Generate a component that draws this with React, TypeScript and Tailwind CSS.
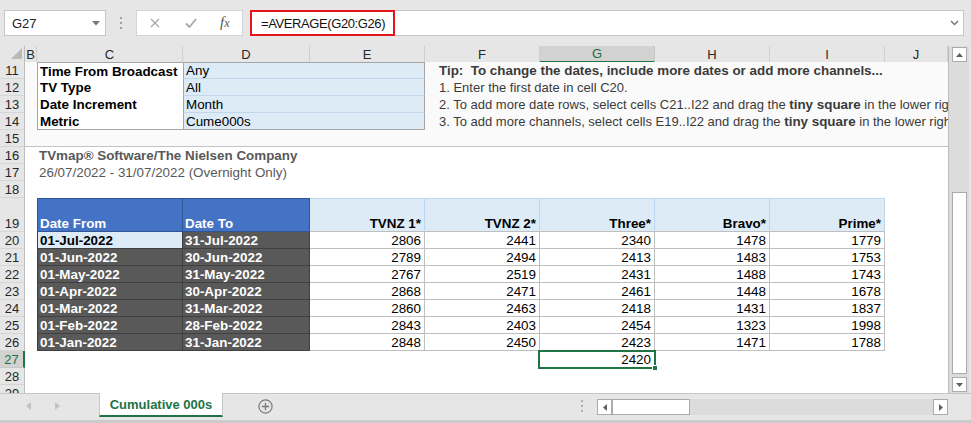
import React from "react";

const COLS = "grid grid-cols-[25px_12px_146px_127px_115px_115px_115px_115px_115px_63px] shrink-0";

const colLetters = ["B", "C", "D", "E", "F", "G", "H", "I", "J"];

const params: [string, string][] = [
  ["Time From Broadcast", "Any"],
  ["TV Type", "All"],
  ["Date Increment", "Month"],
  ["Metric", "Cume000s"],
];

const tips: React.ReactNode[] = [
  <b className="text-[13.4px]">Tip:  To change the dates, include more dates or add more channels...</b>,
  <>1. Enter the first date in cell C20.</>,
  <>
    2. To add more date rows, select cells C21..I22 and drag the <b className="text-[13.4px]">tiny square</b> in the lower right corner down.
  </>,
  <>
    3. To add more channels, select cells E19..I22 and drag the <b className="text-[13.4px]">tiny square</b> in the lower right corner across.
  </>,
];

const heads = ["TVNZ 1*", "TVNZ 2*", "Three*", "Bravo*", "Prime*"];

const rows: [string, string, number, number, number, number, number][] = [
  ["01-Jul-2022", "31-Jul-2022", 2806, 2441, 2340, 1478, 1779],
  ["01-Jun-2022", "30-Jun-2022", 2789, 2494, 2413, 1483, 1753],
  ["01-May-2022", "31-May-2022", 2767, 2519, 2431, 1488, 1743],
  ["01-Apr-2022", "30-Apr-2022", 2868, 2471, 2461, 1448, 1678],
  ["01-Mar-2022", "31-Mar-2022", 2860, 2463, 2418, 1431, 1837],
  ["01-Feb-2022", "28-Feb-2022", 2843, 2403, 2454, 1323, 1998],
  ["01-Jan-2022", "31-Jan-2022", 2848, 2450, 2423, 1471, 1788],
];

function RowHead({ n, selected = false }: { n: number; selected?: boolean }) {
  if (selected)
    return (
      <div className="flex items-end justify-center text-[13px] bg-[#d2d2d2] text-[#217346] border-r-2 border-r-[#217346] border-b border-b-[#c6c6c6]">
        {n}
      </div>
    );
  return (
    <div className="flex items-end justify-center text-[13px] bg-[#e6e6e6] text-[#262626] border-r border-r-[#bdbdbd] border-b border-b-[#d6d6d6]">
      {n}
    </div>
  );
}

function ParamRow({ i }: { i: number }) {
  const [k, v] = params[i];
  const cCls =
    i === 0
      ? "flex items-center pl-[2px] font-bold text-black bg-white border-l border-t border-[#a6a6a6] whitespace-nowrap"
      : i === 3
      ? "flex items-center pl-[2px] font-bold text-black bg-white border-l border-b border-[#a6a6a6] whitespace-nowrap"
      : "flex items-center pl-[2px] font-bold text-black bg-white border-l border-[#a6a6a6] whitespace-nowrap";
  const dCls =
    i === 0
      ? "col-span-2 flex items-center pl-[2px] text-black bg-[#ddebf7] border-l border-r border-t border-[#a6a6a6] border-b border-b-[#c2d7ec]"
      : i === 3
      ? "col-span-2 flex items-center pl-[2px] text-black bg-[#ddebf7] border-l border-r border-b border-[#a6a6a6]"
      : "col-span-2 flex items-center pl-[2px] text-black bg-[#ddebf7] border-l border-r border-[#a6a6a6] border-b border-b-[#c2d7ec]";
  return (
    <div className={`${COLS} h-[17px]`}>
      <RowHead n={11 + i} />
      <div className="bg-[#fafafa]" />
      <div className={cCls}>{k}</div>
      <div className={dCls}>{v}</div>
      <div className="col-span-5 bg-[#fafafa] pl-[14px] flex items-center overflow-hidden text-[#3b3b3b] text-[13px]">
        <span className="whitespace-pre">{tips[i]}</span>
      </div>
    </div>
  );
}

function DataRow({ n, r, first }: { n: number; r: (string | number)[]; first: boolean }) {
  return (
    <div className={`${COLS} h-[17px]`}>
      <RowHead n={n} />
      <div />
      <div
        className={
          first
            ? "flex items-center pl-[2px] font-bold bg-[#ddebf7] text-black border-l border-r border-b border-[#404040]"
            : "flex items-center pl-[2px] font-bold bg-[#595959] text-white border-l border-r border-b border-[#404040]"
        }
      >
        {r[0]}
      </div>
      <div className="flex items-center pl-[2px] font-bold bg-[#595959] text-white border-r border-b border-[#404040]">
        {r[1]}
      </div>
      {r.slice(2).map((v, i) => (
        <div
          key={i}
          className="flex items-center justify-end pr-[3px] bg-white text-black border-r border-b border-[#bfbfbf]"
        >
          {v}
        </div>
      ))}
      <div />
    </div>
  );
}

function EmptyRow({ n }: { n: number }) {
  return (
    <div className={`${COLS} h-[17px]`}>
      <RowHead n={n} />
    </div>
  );
}

export default function App() {
  return (
    <div className="w-[971px] h-[423px] flex flex-col overflow-hidden bg-[#e6e6e6] font-['Liberation_Sans',Arial,sans-serif] text-[13px] leading-[15px] text-black">
      {/* Formula bar */}
      <div className="h-[46px] shrink-0 flex items-start pl-[4px] pt-[10px] bg-[#e6e6e6]">
        <div className="w-[102px] h-[26px] bg-white border border-[#c6c6c6] flex items-center pl-[7px] pr-[5px] text-[#222]">
          <span className="flex-1">G27</span>
          <svg width="8" height="5" viewBox="0 0 8 5">
            <polygon points="0,0 8,0 4,4.5" fill="#7a7a7a" />
          </svg>
        </div>
        <div className="w-[30px] h-[26px] flex flex-col items-center justify-center gap-[3px]">
          <div className="w-[2px] h-[2px] bg-[#a0a0a0]" />
          <div className="w-[2px] h-[2px] bg-[#a0a0a0]" />
          <div className="w-[2px] h-[2px] bg-[#a0a0a0]" />
        </div>
        <div className="w-[107px] h-[26px] bg-white border border-[#d4d4d4] flex items-center pl-[13px]">
          <svg width="10" height="10" viewBox="0 0 10 10">
            <path d="M1 1 L9 9 M9 1 L1 9" stroke="#a8a8a8" strokeWidth="1.3" fill="none" />
          </svg>
          <svg className="ml-[25px]" width="12" height="10" viewBox="0 0 12 10">
            <path d="M1 5.5 L4.5 9 L11 1" stroke="#a8a8a8" strokeWidth="1.8" fill="none" />
          </svg>
          <span className="ml-[23px] font-['Liberation_Serif',serif] italic text-[#555] text-[15px] leading-[15px]">
            f<span className="text-[12px]">x</span>
          </span>
        </div>
        <div className="relative ml-[7px] w-[714px] h-[26px] bg-white border border-[#c6c6c6] flex items-center pl-[10px] pr-[4px]">
          <span className="text-[13px] tracking-[-0.4px] text-[#111]">=AVERAGE(G20:G26)</span>
          <svg className="ml-auto" width="9" height="6" viewBox="0 0 9 6">
            <path d="M1 1 L4.5 4.5 L8 1" stroke="#777" strokeWidth="1.5" fill="none" />
          </svg>
          <div className="absolute -left-px -top-px w-[145px] h-[26px] border-2 border-[#e3161c]" />
        </div>
      </div>

      {/* Sheet + vertical scrollbar */}
      <div className="h-[347px] shrink-0 flex">
        <div className="w-[948px] flex flex-col bg-white">
          {/* Column headers */}
          <div className={`${COLS} h-[16px] bg-[#e6e6e6]`}>
            <div className="flex items-end justify-end pr-[2px] pb-[3px] border-r border-r-[#bdbdbd] border-b border-b-[#bdbdbd]">
              <svg width="11" height="11" viewBox="0 0 11 11">
                <polygon points="11,0 11,11 0,11" fill="#b9b9b9" />
              </svg>
            </div>
            {colLetters.map((l) =>
              l === "G" ? (
                <div
                  key={l}
                  className="flex items-center justify-center bg-[#d2d2d2] text-[#1e6b47] border-r border-r-[#c6c6c6] border-b-2 border-b-[#217346]"
                >
                  {l}
                </div>
              ) : (
                <div
                  key={l}
                  className="flex items-center justify-center text-[#262626] border-r border-r-[#d0d0d0] border-b border-b-[#bdbdbd]"
                >
                  {l}
                </div>
              )
            )}
          </div>

          {/* Rows */}
          <div className="flex-1 flex flex-col overflow-hidden text-[13.4px]">
            {[0, 1, 2, 3].map((i) => (
              <ParamRow key={i} i={i} />
            ))}
            <div className={`${COLS} h-[17px]`}>
              <RowHead n={15} />
              <div className="col-span-9 bg-[#fafafa] border-b border-[#c3c3c3]" />
            </div>
            <div className={`${COLS} h-[17px]`}>
              <RowHead n={16} />
              <div />
              <div className="col-span-8 flex items-center pl-[2px] font-bold text-[#595959] whitespace-nowrap">
                TVmap® Software/The Nielsen Company
              </div>
            </div>
            <div className={`${COLS} h-[17px]`}>
              <RowHead n={17} />
              <div />
              <div className="col-span-8 flex items-center pl-[2px] text-[#595959] whitespace-nowrap">
                26/07/2022 - 31/07/2022 (Overnight Only)
              </div>
            </div>
            <EmptyRow n={18} />
            <div className={`${COLS} h-[34px]`}>
              <RowHead n={19} />
              <div />
              <div className="flex items-end pl-[2px] font-bold text-white bg-[#4472c4] border-t border-l border-r border-b border-[#2f5597]">
                Date From
              </div>
              <div className="flex items-end pl-[2px] font-bold text-white bg-[#4472c4] border-t border-r border-b border-[#2f5597]">
                Date To
              </div>
              {heads.map((h) => (
                <div
                  key={h}
                  className="flex items-end justify-end pr-[3px] font-bold text-black bg-[#ddebf7] border-t border-r border-[#bdd7ee] border-b border-b-[#bfbfbf]"
                >
                  {h}
                </div>
              ))}
              <div />
            </div>
            {rows.map((r, i) => (
              <DataRow key={i} n={20 + i} r={r} first={i === 0} />
            ))}
            <div className={`${COLS} h-[17px]`}>
              <RowHead n={27} selected />
              <div />
              <div />
              <div />
              <div />
              <div />
              <div className="relative flex items-center justify-end pr-[4px]">
                2420
                <div className="absolute -left-[2px] -top-[1px] -right-[1px] -bottom-[1px] border-2 border-[#217346] z-10" />
                <div className="absolute -right-[3px] -bottom-[3px] w-[6px] h-[6px] bg-[#217346] border border-white z-20" />
              </div>
              <div />
              <div />
              <div />
            </div>
            <EmptyRow n={28} />
            <EmptyRow n={29} />
          </div>
        </div>

        {/* Vertical scrollbar */}
        <div className="w-[23px] flex flex-col border-l border-l-[#bdbdbd] bg-[#e6e6e6]">
          <div className="w-[20px] flex-1 flex flex-col bg-[#dcdcdc] pl-[3px] pt-[1px] pb-[1px]">
            <div className="w-[15px] h-[15px] shrink-0 bg-white border border-[#ababab] flex items-center justify-center">
              <svg width="7" height="4" viewBox="0 0 7 4">
                <polygon points="0,4 7,4 3.5,0" fill="#606060" />
              </svg>
            </div>
            <div className="mt-[130px] w-[15px] h-[182px] shrink-0 bg-white border border-[#ababab]" />
            <div className="flex-1" />
            <div className="w-[15px] h-[15px] shrink-0 bg-white border border-[#ababab] flex items-center justify-center">
              <svg width="7" height="4" viewBox="0 0 7 4">
                <polygon points="0,0 7,0 3.5,4" fill="#606060" />
              </svg>
            </div>
          </div>
        </div>
      </div>

      {/* Bottom tab bar */}
      <div className="h-[30px] shrink-0 flex items-start bg-[#e6e6e6] border-t border-t-[#c6c6c6] border-b-[3px] border-b-[#cbcbcb]">
        <div className="w-[99px] h-[24px] flex items-center pl-[26px]">
          <svg width="5" height="8" viewBox="0 0 5 8">
            <polygon points="5,0 5,8 0,4" fill="#c2c2c2" />
          </svg>
          <svg className="ml-[24px]" width="5" height="8" viewBox="0 0 5 8">
            <polygon points="0,0 0,8 5,4" fill="#c2c2c2" />
          </svg>
        </div>
        <div className="-mt-px w-[124px] h-[24px] bg-white border-l border-r border-[#c6c6c6] border-b-2 border-b-[#217346] flex items-center justify-center font-bold text-[#217346]">
          Cumulative 000s
        </div>
        <div className="ml-[35px] h-[24px] flex items-center">
          <svg width="15" height="15" viewBox="0 0 15 15">
            <circle cx="7.5" cy="7.5" r="6.6" stroke="#7a7a7a" strokeWidth="1.2" fill="none" />
            <path d="M7.5 3.8 V11.2 M3.8 7.5 H11.2" stroke="#7a7a7a" strokeWidth="1.3" />
          </svg>
        </div>
        <div className="ml-auto w-[16px] h-[24px] flex flex-col items-center justify-center gap-[3px]">
          <div className="w-[2px] h-[2px] bg-[#b0b0b0]" />
          <div className="w-[2px] h-[2px] bg-[#b0b0b0]" />
          <div className="w-[2px] h-[2px] bg-[#b0b0b0]" />
        </div>
        <div className="ml-[7px] mr-[23px] mt-[5px] w-[351px] h-[16px] flex bg-[#dcdcdc]">
          <div className="w-[15px] h-[16px] bg-white border border-[#ababab] flex items-center justify-center">
            <svg width="4" height="7" viewBox="0 0 4 7">
              <polygon points="4,0 4,7 0,3.5" fill="#606060" />
            </svg>
          </div>
          <div className="w-[78px] h-[16px] bg-white border border-[#ababab]" />
          <div className="flex-1" />
          <div className="w-[15px] h-[16px] bg-white border border-[#ababab] flex items-center justify-center">
            <svg width="4" height="7" viewBox="0 0 4 7">
              <polygon points="0,0 0,7 4,3.5" fill="#606060" />
            </svg>
          </div>
        </div>
      </div>
    </div>
  );
}
